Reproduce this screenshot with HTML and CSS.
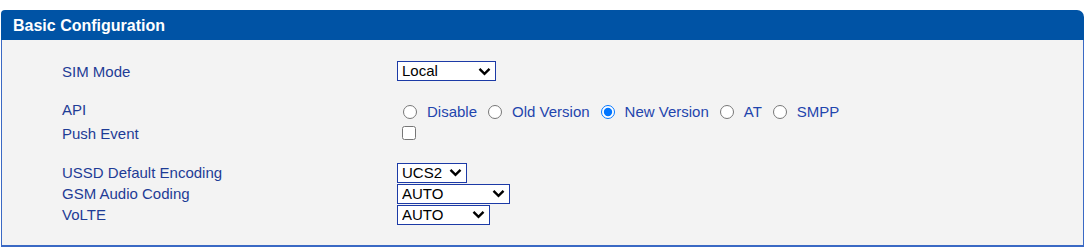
FILE: index.html
```html
<!DOCTYPE html>
<html lang="en">
<head>
  <meta charset="UTF-8">
  <title>Basic Configuration</title>
  <link rel="stylesheet" href="styles.css">
</head>
<body>
  <div class="panel">
    <div class="panel-head">Basic Configuration</div>

    <div class="panel-body">
      <div class="group">
        <div class="row">
          <label class="name" for="sim-mode">SIM Mode</label>
          <div class="field">
            <select id="sim-mode" class="sel sel-sim">
              <option>Local</option>
              <option>Remote</option>
            </select>
          </div>
        </div>
      </div>

      <div class="group">
        <div class="row row-api">
          <span class="name">API</span>
          <div class="field radios">
            <label class="opt"><input type="radio" name="api">Disable</label>
            <label class="opt"><input type="radio" name="api">Old Version</label>
            <label class="opt"><input type="radio" name="api" checked>New Version</label>
            <label class="opt"><input type="radio" name="api">AT</label>
            <label class="opt"><input type="radio" name="api">SMPP</label>
          </div>
        </div>
        <div class="row">
          <label class="name" for="push-event">Push Event</label>
          <div class="field">
            <input type="checkbox" id="push-event" class="check">
          </div>
        </div>
      </div>

      <div class="group">
        <div class="row row-tight">
          <label class="name" for="ussd">USSD Default Encoding</label>
          <div class="field">
            <select id="ussd" class="sel sel-ussd">
              <option>UCS2</option>
              <option>GSM</option>
            </select>
          </div>
        </div>
        <div class="row row-tight">
          <label class="name" for="gsm-audio">GSM Audio Coding</label>
          <div class="field">
            <select id="gsm-audio" class="sel sel-gsm">
              <option>AUTO</option>
              <option>FR</option>
              <option>EFR</option>
              <option>HR</option>
            </select>
          </div>
        </div>
        <div class="row row-tight">
          <label class="name" for="volte">VoLTE</label>
          <div class="field">
            <select id="volte" class="sel sel-volte">
              <option>AUTO</option>
              <option>ON</option>
              <option>OFF</option>
            </select>
          </div>
        </div>
      </div>
    </div>
  </div>
</body>
</html>
```

FILE: styles.css
```css
* {
  box-sizing: border-box;
}

body {
  margin: 0;
  background: #fff;
  font-family: 'Liberation Sans', Arial, sans-serif;
}

.panel {
  margin: 10px 3px 0 1px;
  border-radius: 4px 7px 0 0;
  overflow: hidden;
}

.panel-head {
  height: 30px;
  padding: 2px 0 0 12px;
  background: #0053a5;
  color: #fff;
  font-size: 16px;
  font-weight: bold;
  line-height: 28px;
}

.panel-body {
  background: #f3f3f3;
  border: 1px solid #3a69c4;
  border-top: none;
  border-bottom-width: 2px;
  padding: 21px 0 20px 60px;
}

.group {
  margin-bottom: 20px;
}

.group + .group + .group {
  margin-top: -1px;
}

.group:last-child {
  margin-bottom: 0;
}

.row {
  display: grid;
  grid-template-columns: 335px 1fr;
  align-items: center;
  height: 20px;
}

.row-api {
  height: 21px;
  margin-bottom: 1px;
}

.row-api .name {
  align-self: start;
}

.row-tight {
  height: 21px;
}

.name {
  color: #1e3c96;
  font-size: 15px;
}

.field {
  display: flex;
  align-items: center;
}

.sel {
  appearance: none;
  height: 20px;
  padding: 0 0 0 4px;
  border: 1px solid #1c3aa6;
  border-radius: 0;
  background: #fff url("data:image/svg+xml,%3Csvg xmlns='http://www.w3.org/2000/svg' width='13' height='9' viewBox='0 0 13 9'%3E%3Cpath d='M1.5 1.8 6.5 6.8 11.5 1.8' fill='none' stroke='%23000' stroke-width='2.4'/%3E%3C/svg%3E") no-repeat right 4px center;
  color: #000;
  font-family: 'Liberation Sans', Arial, sans-serif;
  font-size: 15px;
  line-height: 18px;
}

.sel-sim { width: 99px; }
.sel-ussd { width: 70px; }
.sel-gsm { width: 113px; }
.sel-volte { width: 93px; }

.opt {
  display: flex;
  align-items: center;
  color: #1f45ad;
  font-size: 15px;
}

.opt input {
  margin: 0 10px 0 11px;
  width: 14px;
  height: 14px;
}

.opt:first-child input {
  margin-left: 6px;
}

.check {
  margin: 0 0 0 5px;
  width: 14px;
  height: 14px;
}
```
